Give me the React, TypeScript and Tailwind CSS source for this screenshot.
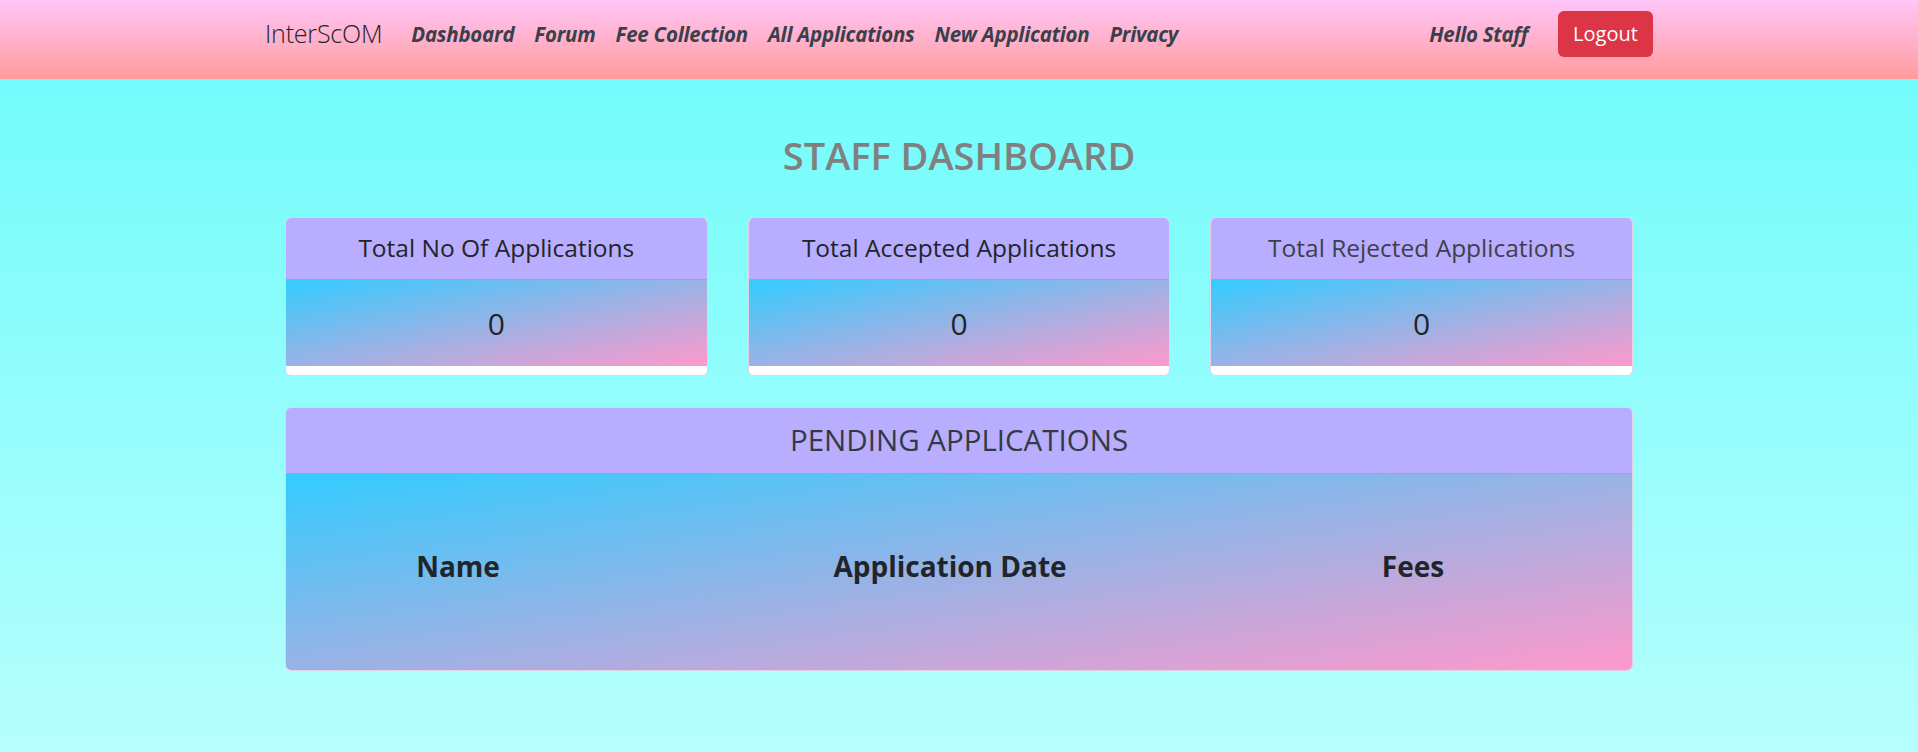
const font = "font-['Open_Sans','Noto_Sans',sans-serif]";

function StatCard({ title, value, muted }: { title: string; value: number; muted?: boolean }) {
  return (
    <div className="rounded-md border border-[#e2d2e6] bg-white overflow-hidden pb-[9px]">
      <div
        className={`h-[62px] flex items-center justify-center bg-[#b9adff] border-b border-[#a898e6] text-[24.5px] ${
          muted ? 'text-[#3d3f4a]' : 'text-[#212529]'
        }`}
      >
        {title}
      </div>
      <div className="h-[86px] flex items-center justify-center bg-[linear-gradient(to_bottom_right,#33ccff,#ff99cc)] text-[30px] text-[#212529]">
        {value}
      </div>
    </div>
  );
}

export default function App() {
  const links = ['Dashboard', 'Forum', 'Fee Collection', 'All Applications', 'New Application', 'Privacy'];

  return (
    <div className={`min-h-[752px] bg-[linear-gradient(to_bottom,#6bfbfb,#b6fffd)] ${font}`}>
      <nav className="h-[79px] pt-[11px] bg-[linear-gradient(to_bottom,#ffc6f9,#ff9c9c)]">
        <div className="w-[1388px] mx-auto h-[46px] flex items-center">
          <span className="text-[25px] text-[#212529] font-light tracking-[-0.2px]">InterScOM</span>
          <ul className="flex items-center gap-[20px] ml-[29px]">
            {links.map((l) => (
              <li key={l} className="text-[20.5px] font-bold italic text-[#3b3f4a] tracking-[-0.25px]">
                {l}
              </li>
            ))}
          </ul>
          <span className="ml-auto text-[20.5px] font-bold italic text-[#3b3f4a] tracking-[-0.3px]">Hello Staff</span>
          <button className="ml-[30px] w-[95px] h-[46px] rounded-md bg-[#dc3545] text-white text-[20px]">
            Logout
          </button>
        </div>
      </nav>

      <main className="w-[1348px] mx-auto pt-[57px]">
        <h1 className="text-center text-[38px] font-semibold text-[#808080] leading-none">STAFF DASHBOARD</h1>

        <div className="grid grid-cols-3 gap-[40px] mt-[43px]">
          <StatCard title="Total No Of Applications" value={0} />
          <StatCard title="Total Accepted Applications" value={0} />
          <StatCard title="Total Rejected Applications" value={0} muted />
        </div>

        <div className="mt-[31px] rounded-md border border-[#e2d2e6] overflow-hidden">
          <div className="h-[66px] flex items-center justify-center bg-[#b9adff] border-b border-[#a898e6] text-[29.5px] text-[#343a40]">
            PENDING APPLICATIONS
          </div>
          <div className="h-[196px] bg-[linear-gradient(to_bottom_right,#33ccff,#ff99cc)] flex items-start pt-[71px]">
            <div className="w-[344px] text-center text-[28px] font-bold text-[#212529]">Name</div>
            <div className="w-[640px] text-center text-[28px] font-bold text-[#212529]">Application Date</div>
            <div className="w-[286px] text-center text-[28px] font-bold text-[#212529]">Fees</div>
          </div>
        </div>
      </main>
    </div>
  );
}
